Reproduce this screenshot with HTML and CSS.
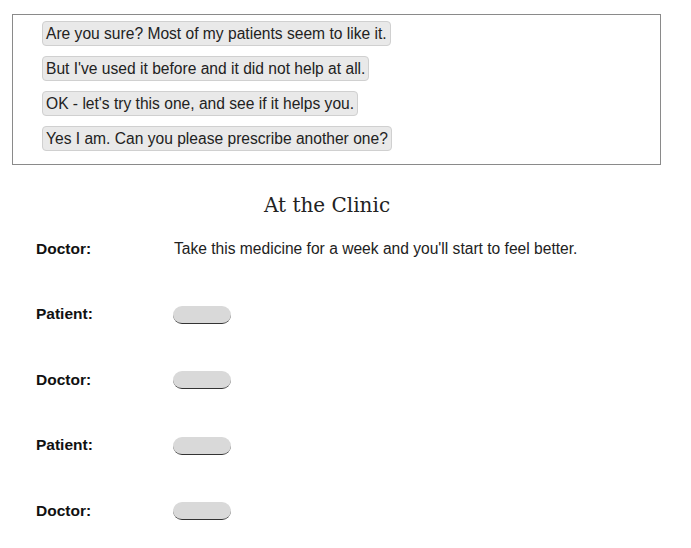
FILE: index.html
```html
<!DOCTYPE html>
<html>
<head>
<meta charset="utf-8">
<link rel="stylesheet" href="styles.css">
</head>
<body>
<div class="page">
  <div class="options">
    <span class="chip">Are you sure? Most of my patients seem to like it.</span>
    <span class="chip">But I've used it before and it did not help at all.</span>
    <span class="chip">OK - let's try this one, and see if it helps you.</span>
    <span class="chip">Yes I am. Can you please prescribe another one?</span>
  </div>
  <h1 class="title">At the Clinic</h1>
  <div class="dialogue">
    <div class="row">
      <div class="who">Doctor:</div>
      <div class="line">Take this medicine for a week and you'll start to feel better.</div>
    </div>
    <div class="row">
      <div class="who">Patient:</div>
      <div class="line"><span class="blank"></span></div>
    </div>
    <div class="row">
      <div class="who">Doctor:</div>
      <div class="line"><span class="blank"></span></div>
    </div>
    <div class="row">
      <div class="who">Patient:</div>
      <div class="line"><span class="blank"></span></div>
    </div>
    <div class="row">
      <div class="who">Doctor:</div>
      <div class="line"><span class="blank"></span></div>
    </div>
  </div>
</div>
</body>
</html>
```
FILE: styles.css
```css
html, body {
  margin: 0;
  padding: 0;
  background: #fff;
}
.page {
  padding: 14px 0 0 12px;
  width: 649px;
  font-family: "Liberation Sans", Arial, sans-serif;
  color: #222;
}
.options {
  border: 1px solid #8a8a8a;
  padding: 6px 20px 13px 29px;
  display: flex;
  flex-direction: column;
  align-items: flex-start;
  gap: 10px;
}
.chip {
  display: inline-block;
  background: #e9e9e9;
  border: 1px solid #d0d0d0;
  border-radius: 4px;
  padding: 0 3px;
  height: 23px;
  line-height: 23px;
  font-size: 15.6px;
  color: #222;
}
.title {
  font-family: "DejaVu Serif", Georgia, serif;
  font-weight: normal;
  font-size: 20px;
  line-height: 20px;
  text-align: center;
  margin: 30px 0 0 0;
  padding-right: 19px;
  color: #222;
}
.dialogue {
  display: flex;
  flex-direction: column;
  margin-top: 1px;
}
.row {
  display: flex;
  align-items: center;
  height: 65.5px;
}
.who {
  width: 162px;
  padding-left: 24px;
  box-sizing: border-box;
  font-weight: bold;
  font-size: 15.5px;
  color: #111;
}
.line {
  font-size: 15.6px;
  color: #222;
}
.blank {
  display: inline-block;
  width: 58px;
  height: 18px;
  border-radius: 9px;
  background: #d9d9d9;
  border-bottom: 1px solid #333;
  box-sizing: border-box;
  margin-left: -1px;
  vertical-align: middle;
}
```
